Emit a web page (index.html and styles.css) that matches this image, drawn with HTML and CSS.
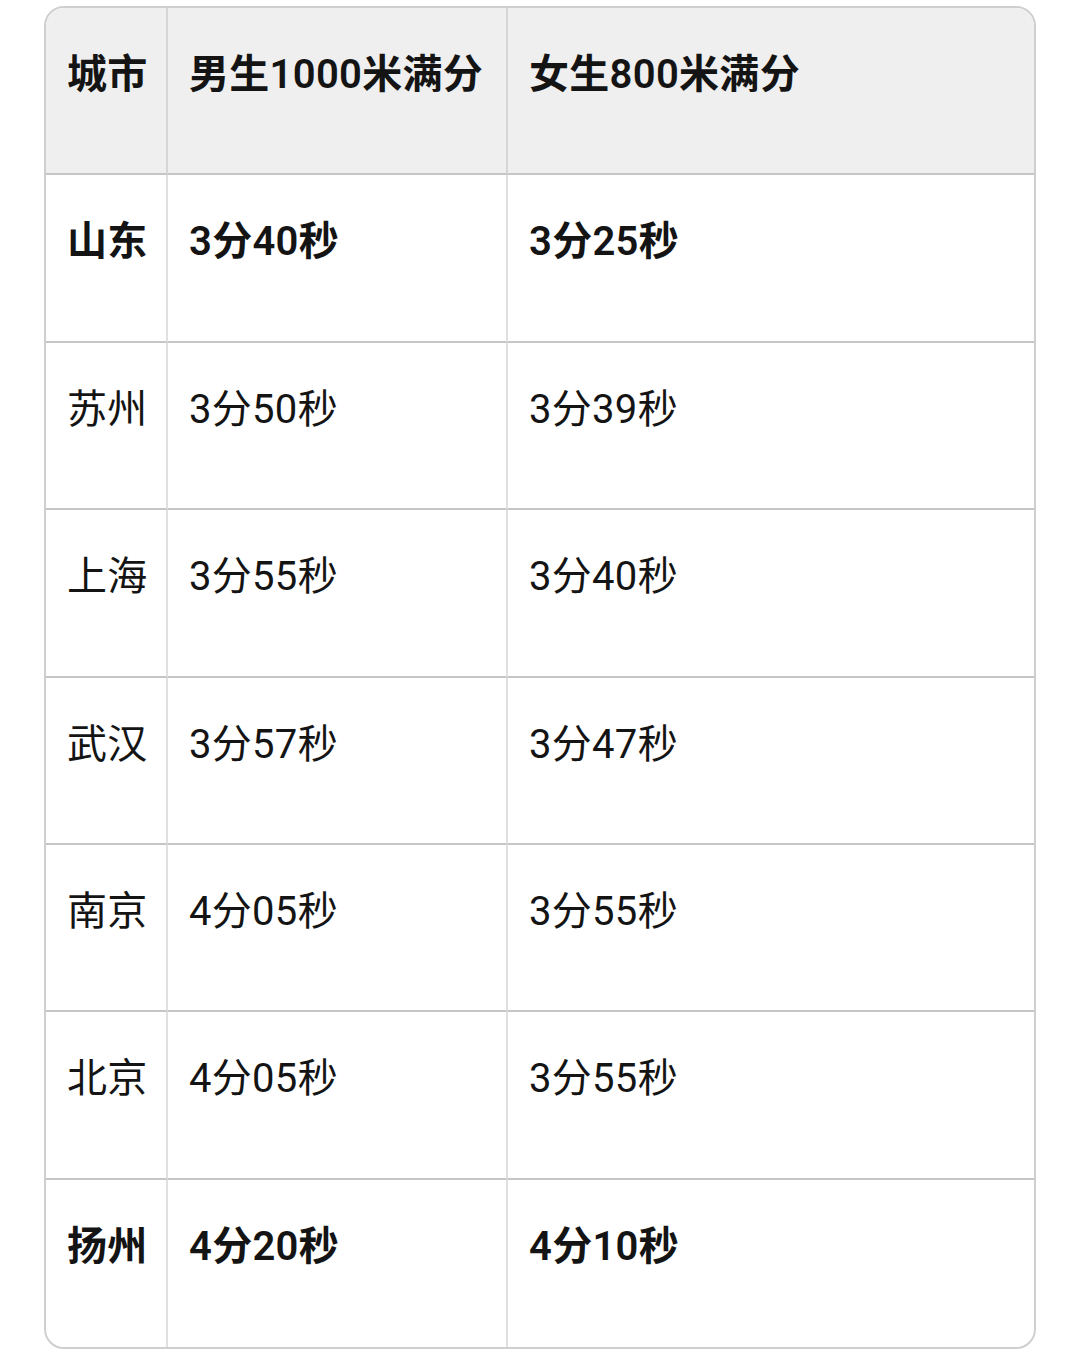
FILE: index.html
```html
<!DOCTYPE html>
<html lang="zh">
<head>
<meta charset="utf-8">
<link rel="stylesheet" href="styles.css">
</head>
<body>
<div class="page">
  <div class="table">
    <div class="cell head">城市</div>
    <div class="cell head">男生1000米满分</div>
    <div class="cell head last">女生800米满分</div>

    <div class="cell bold">山东</div>
    <div class="cell bold">3分40秒</div>
    <div class="cell bold last">3分25秒</div>

    <div class="cell">苏州</div>
    <div class="cell">3分50秒</div>
    <div class="cell last">3分39秒</div>

    <div class="cell">上海</div>
    <div class="cell">3分55秒</div>
    <div class="cell last">3分40秒</div>

    <div class="cell">武汉</div>
    <div class="cell">3分57秒</div>
    <div class="cell last">3分47秒</div>

    <div class="cell">南京</div>
    <div class="cell">4分05秒</div>
    <div class="cell last">3分55秒</div>

    <div class="cell">北京</div>
    <div class="cell">4分05秒</div>
    <div class="cell last">3分55秒</div>

    <div class="cell bold bottom">扬州</div>
    <div class="cell bold bottom">4分20秒</div>
    <div class="cell bold bottom last">4分10秒</div>
  </div>
</div>
</body>
</html>
```

FILE: styles.css
```css
html, body {
  margin: 0;
  padding: 0;
  background: #ffffff;
}

.page {
  padding: 6px 44px 12px 44px;
  font-family: Roboto, "Noto Sans CJK SC", sans-serif;
  color: #141414;
}

.table {
  display: grid;
  grid-template-columns: 122px 340px 1fr;
  grid-template-rows: repeat(8, 1fr);
  height: 1343px;
  width: 992px;
  border: 2px solid #cfcfcf;
  border-radius: 20px;
  overflow: hidden;
  box-sizing: border-box;
}

.cell {
  box-sizing: border-box;
  padding: 38px 0 0 21px;
  font-size: 40px;
  line-height: 58px;
  letter-spacing: 0.3px;
  white-space: nowrap;
  border-right: 2px solid #e0e0e0;
  border-bottom: 2px solid #c6c6c6;
}

.cell.last {
  border-right: none;
}

.cell.bottom {
  border-bottom: none;
}

.head {
  background: #efefef;
  font-weight: 600;
  border-right-color: #d6d6d6;
}

.bold {
  font-weight: 600;
}
```
